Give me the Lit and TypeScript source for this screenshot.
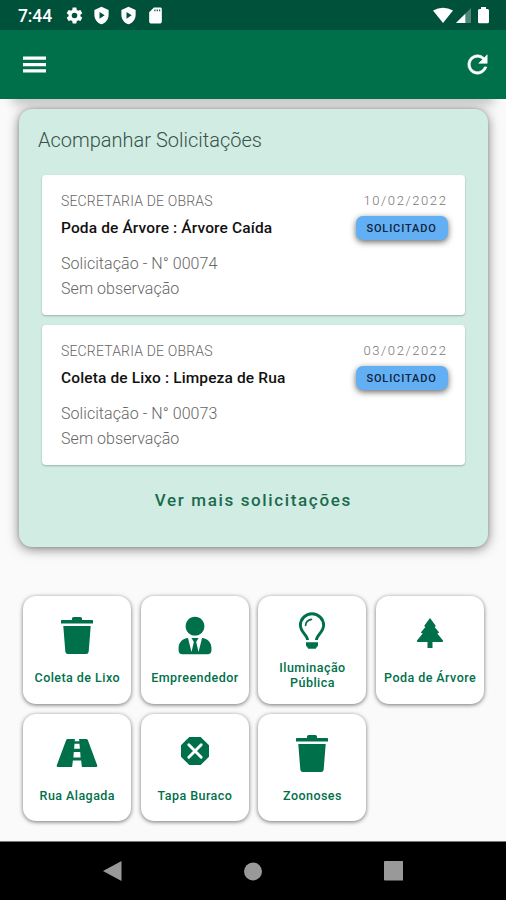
import { LitElement, html, svg, css } from "lit";
import { customElement, property } from "lit/decorators.js";

const glyphs: Record<string, unknown> = {
  trash: svg`<path d="M13 6V4.600Q13 3 14.600 3h6.800Q23 3 23 4.600V6h10.200Q34 6 34 6.800V9.600H2V6.800Q2 6 2.800 6zM4.300 12h27.400l-2 25.400Q29.500 40 27 40H9Q6.500 40 6.300 37.400z"/>`,
  person: svg`<path transform="translate(1.600 2.800) scale(.0733)" d="M224 256c70.7 0 128-57.3 128-128S294.7 0 224 0 96 57.3 96 128s57.3 128 128 128zm95.8 32.6L272 480l-32-136 32-56h-96l32 56-32 136-47.800-191.400C56.900 292 0 350.300 0 422.400V464c0 26.500 21.500 48 48 48h352c26.500 0 48-21.500 48-48v-41.600c0-72.100-56.900-130.400-128.200-133.800z"/>`,
  bulb: svg`<path d="M13.600 30C13.200 25 6.400 22 6.400 15.300a11.600 11.600 0 0 1 23.200 0c0 6.700-6.800 9.700-7.200 14.700" fill="none" stroke="currentColor" stroke-width="2.900"/><path d="M11.600 15.400q.4-5 5.800-6" fill="none" stroke="currentColor" stroke-width="1.700" stroke-linecap="round"/><path d="M12 32.200h12v3.400l-2.400 3.200h-7.200L12 35.600z"/>`,
  tree: svg`<path d="M18 4l5.900 8-1.300 1 4.600 5.600-1.900 1L31 26.500q.6 1.200-.8 1.400H20.500V34h-5v-6.100H5.800Q4.400 27.700 5 26.500l5.700-6.900-1.900-1L13.400 13l-1.300-1z"/>`,
  road: svg`<path fill-rule="evenodd" d="M8.800 7H16l-.4 2.300h4.800L20 7h7.200q1.200 0 1.700 1.200L38.200 33.300Q38.700 35 37 35H22.900l-.8-6.500h-8.200L13.100 35H-1Q-2.700 35-2.200 33.300L7.100 8.200Q7.600 7 8.800 7zM15.500 11.800l-.4 5h5.800l-.4-5zM14.800 20l-.4 5.500h7.200L21.200 20z"/>`,
  octagon: svg`<path d="M12.300 5h11.400l8.300 8.300v11.400L23.700 33H12.300L4 24.700V13.300z"/><path d="M11.800 12.800l12.400 12.400M24.200 12.800L11.800 25.200" stroke="#fff" stroke-width="2.900" stroke-linecap="round"/>`,
};

@customElement("status-bar")
class StatusBar extends LitElement {
  static styles = css`
    :host { display: flex; height: 30px; box-sizing: border-box; padding: 0 15px 0 18px; align-items: center; background: #00513a; color: #fff; }
    .time { font: 500 17.500px/30px Roboto, sans-serif; width: 47px; height: 30px; padding-top: 1px; box-sizing: border-box; letter-spacing: -.1px; }
    svg { display: block; fill: #fff; }
    .left { display: flex; gap: 8px; flex: 1; }
    .right { display: flex; gap: 3px; }
  `;
  render() {
    const shield = html`<svg width="19" height="19" viewBox="0 0 24 24"><path fill-rule="evenodd" d="M12 1L3 5v6c0 5.550 3.840 10.740 9 12 5.160-1.260 9-6.450 9-12V5zM9.500 7.500v8.500l6.500-4.200z"/></svg>`;
    return html`
      <span class="time">7:44</span>
      <div class="left">
        <svg width="19" height="19" viewBox="0 0 24 24"><path d="M19.430 12.980c.04-.32.07-.64.07-.98s-.03-.66-.07-.98l2.110-1.650c.19-.15.24-.42.12-.64l-2-3.460c-.12-.22-.39-.3-.61-.22l-2.490 1c-.52-.4-1.080-.73-1.690-.98l-.38-2.650C14.460 2.180 14.250 2 14 2h-4c-.25 0-.46.18-.49.42l-.38 2.650c-.61.25-1.170.59-1.690.98l-2.490-1c-.23-.09-.49 0-.61.22l-2 3.460c-.13.22-.07.49.12.64l2.110 1.650c-.04.32-.07.65-.07.98s.03.66.07.98l-2.110 1.650c-.19.15-.24.42-.12.64l2 3.460c.12.22.39.3.61.22l2.490-1c.52.4 1.080.73 1.690.98l.38 2.650c.03.24.24.42.49.42h4c.25 0 .46-.18.49-.42l.38-2.650c.61-.25 1.170-.59 1.690-.98l2.490 1c.23.09.49 0 .61-.22l2-3.460c.12-.22.07-.49-.12-.64zM12 15.500a3.500 3.500 0 1 1 0-7 3.500 3.500 0 0 1 0 7z"/></svg>
        ${shield}${shield}
        <svg width="19" height="19" viewBox="0 0 24 24"><path d="M18 2h-8L4 8v12c0 1.100.9 2 2 2h12c1.100 0 2-.9 2-2V4c0-1.100-.9-2-2-2zM12 6.500h-1.500V4.500H12zm3 0h-1.500V4.500H15zm3 0h-1.500V4.500H18z"/></svg>
      </div>
      <div class="right">
        <svg width="20" height="17" viewBox="0 0 20 17"><path d="M0 3.500Q10-2.200 20 3.500L10 16z"/></svg>
        <svg width="16" height="17" viewBox="0 0 16 17"><path fill="#4d8775" d="M15 1v15H0z"/><path d="M9.300 6.700V16H0z"/></svg>
        <svg width="16" height="17" viewBox="0 0 16 17"><path d="M6 0h5v2h1.500Q14 2 14 3.500v11.300q0 1.500-1.500 1.500h-8Q3 16.300 3 14.800V3.500Q3 2 4.500 2H6z"/></svg>
      </div>`;
  }
}

@customElement("request-card")
class RequestCard extends LitElement {
  @property() heading = "";
  @property() date = "";
  @property() number = "";
  static styles = css`
    :host { display: flex; justify-content: space-between; box-sizing: border-box; height: 140px; padding: 16px 17px 0 19px; background: #fff; border-radius: 4px; box-shadow: 0 1px 2px rgba(0,0,0,.25); font-family: Roboto, sans-serif; white-space: nowrap; }
    .dept { font-size: 14px; font-weight: 300; line-height: 20px; color: #666; letter-spacing: .17px; }
    .name { font-size: 15.500px; font-weight: 500; line-height: 22px; margin-top: 6px; color: #111; letter-spacing: .13px; }
    .line { font-size: 16px; font-weight: 300; line-height: 25px; color: #666; letter-spacing: .06px; }
    .first { margin-top: 12px; }
    .side { display: flex; flex-direction: column; align-items: flex-end; }
    .date { font-size: 13px; font-weight: 300; line-height: 20px; letter-spacing: 1.600px; color: #777; }
    .chip { width: 92px; height: 24px; margin-top: 5px; border-radius: 7px; background: #62aff4; box-shadow: 0 2px 6px rgba(0,0,0,.6); text-align: center; font-size: 11px; font-weight: 500; line-height: 25px; letter-spacing: .85px; color: #10233c; }
  `;
  render() {
    return html`
      <div>
        <div class="dept">SECRETARIA DE OBRAS</div>
        <div class="name">${this.heading}</div>
        <div class="line first">Solicitação - N° ${this.number}</div>
        <div class="line">Sem observação</div>
      </div>
      <div class="side"><div class="date">${this.date}</div><div class="chip">SOLICITADO</div></div>`;
  }
}

@customElement("service-tile")
class ServiceTile extends LitElement {
  @property() label = "";
  @property() icon = "";
  static styles = css`
    :host { display: flex; flex-direction: column; align-items: center; justify-content: center; box-sizing: border-box; height: 107.500px; background: #fff; color: #00704a; border-radius: 13px; box-shadow: 0 1px 4px rgba(0,0,0,.55); }
    svg { display: block; width: 36px; height: 42px; overflow: visible; fill: currentColor; }
    .label { margin-top: 14px; padding: 0 2px; text-align: center; font: 500 12.500px/15px Roboto, sans-serif; letter-spacing: .45px; }
    :host([icon="bulb"]) .label { margin-top: 8px; padding: 0 12px; }
  `;
  render() {
    return html`<svg viewBox="0 0 36 42">${glyphs[this.icon]}</svg><div class="label">${this.label}</div>`;
  }
}

@customElement("app-root")
class AppRoot extends LitElement {
  static styles = css`
    :host { display: flex; flex-direction: column; width: 506px; height: 900px; overflow: hidden; background: #fafafa; font-family: Roboto, sans-serif; }
    .bar { display: flex; align-items: center; justify-content: space-between; height: 68.500px; flex: none; box-sizing: border-box; padding: 0 14px 0 18px; background: #00704a; box-shadow: 0 17px 10px -12px rgba(0,0,0,.22); }
    .bar svg { display: block; fill: #fff; }
    .body { flex: 1; min-height: 0; overflow: hidden; }
    .panel { box-sizing: border-box; width: 469px; height: 438px; margin: 10.500px 0 0 19px; padding: 18px 23.500px 0 23px; border-radius: 13px; background: #d1ece3; box-shadow: 0 2px 12px rgba(0,0,0,.5), 0 0 3px rgba(0,0,0,.15); }
    .title { margin: 0 0 22px -4px; height: 26px; font-size: 20px; font-weight: 300; line-height: 26px; color: #385149; }
    .requests { display: grid; gap: 10px; }
    .more { margin-top: 23.500px; text-align: center; font-size: 17px; font-weight: 500; line-height: 22px; letter-spacing: 1.640px; color: #1a6b4e; }
    .services { display: grid; grid-template-columns: repeat(4, 108px); gap: 10px 9.600px; margin: 49px 0 0 23.300px; }
    .nav { display: flex; align-items: center; justify-content: space-between; box-sizing: border-box; height: 59px; flex: none; padding: 0 103px 0 103px; border-top: 1px solid #777; background: #000; }
    .nav svg { display: block; fill: #999; }
  `;
  render() {
    const services = [
      ["Coleta de Lixo", "trash"], ["Empreendedor", "person"], ["Iluminação Pública", "bulb"], ["Poda de Árvore", "tree"],
      ["Rua Alagada", "road"], ["Tapa Buraco", "octagon"], ["Zoonoses", "trash"],
    ];
    return html`
      <status-bar></status-bar>
      <div class="bar">
        <svg width="33" height="33" viewBox="0 0 33 33"><path d="M5 8.500h23v3.300H5zM5 14.900h23v3.300H5zM5 21.300h23v3.300H5z"/></svg>
        <svg width="29" height="29" viewBox="0 0 24 24"><path d="M17.650 6.350A7.960 7.960 0 0 0 12 4a8 8 0 1 0 7.730 10h-2.080A6 6 0 1 1 12 6c1.660 0 3.140.69 4.220 1.780L13 11h7V4z" stroke="#fff" stroke-width=".5"/></svg>
      </div>
      <div class="body">
        <section class="panel">
          <div class="title">Acompanhar Solicitações</div>
          <div class="requests">
            <request-card heading="Poda de Árvore : Árvore Caída" date="10/02/2022" number="00074"></request-card>
            <request-card heading="Coleta de Lixo : Limpeza de Rua" date="03/02/2022" number="00073"></request-card>
          </div>
          <div class="more">Ver mais solicitações</div>
        </section>
        <section class="services">
          ${services.map(([label, icon]) => html`<service-tile label=${label} icon=${icon}></service-tile>`)}
        </section>
      </div>
      <div class="nav">
        <svg width="19" height="22" viewBox="0 0 19 22"><path d="M18.500 1v20L0 11z"/></svg>
        <svg width="19" height="19" viewBox="0 0 19 19"><circle cx="10" cy="9.500" r="9"/></svg>
        <svg width="19.500" height="19.500" viewBox="0 0 19.500 19.500"><rect width="19.500" height="19.500" rx="1"/></svg>
      </div>`;
  }
}
